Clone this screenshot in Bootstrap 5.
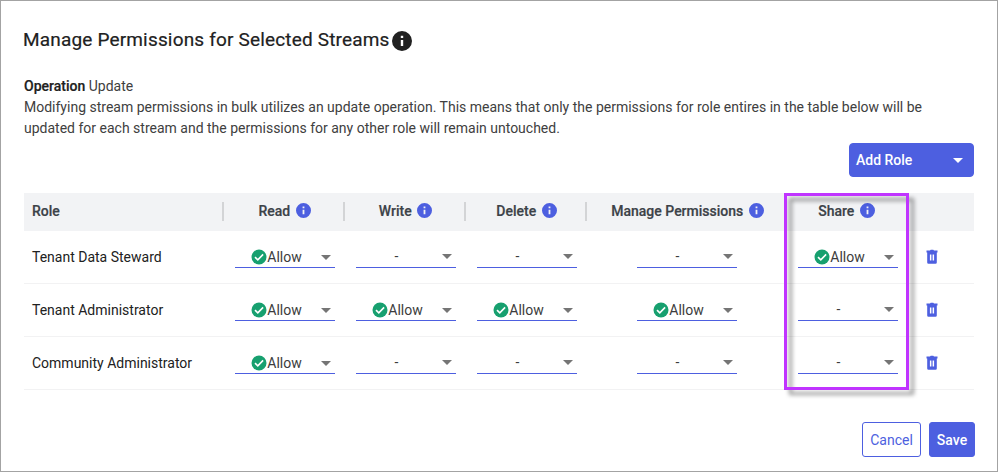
<!DOCTYPE html>
<html lang="en">
<head>
<meta charset="utf-8">
<meta name="viewport" content="width=device-width, initial-scale=1">
<title>Manage Permissions</title>
<link href="https://cdn.jsdelivr.net/npm/bootstrap@5.3.0/dist/css/bootstrap.min.css" rel="stylesheet">
<style>
:root{--brand:#4d5fe0}
body{font-family:Roboto,"Liberation Sans",sans-serif;font-size:14px;line-height:21px;color:#3a3a3a;background:#fff}
.dialog{width:998px;height:472px;border:1px solid #a3a3a3;padding:0 23px 0 22px}
.dialog-title{font-size:19px;line-height:28px;font-weight:400;letter-spacing:.17px;color:#212121;margin:25px 0 22px;-webkit-text-stroke:.2px #212121}
.title-info{margin:2px 0 0 2px}
.intro{margin:0 0 4px 1px;color:#404040}
.intro b{font-weight:500;color:#212121;-webkit-text-stroke:.2px}
.btn{--bs-btn-font-size:14px;--bs-btn-border-radius:3px;padding:0;line-height:20px}
.btn-brand{background:var(--brand);border-color:var(--brand);color:#fff;font-weight:500}
.add-role{width:125px;height:34px;padding:0 10px 0 6px;border-radius:4px}
.perm-table{table-layout:fixed;border-collapse:separate;border-spacing:0;width:950px;margin:16px 0 0 1px;color:#212121}
.perm-table>thead th{height:38px;padding:0 0 2px;background:#f2f3f5;color:#3c4248;font-weight:500;-webkit-text-stroke:.2px;border:0;position:relative;text-align:center;white-space:nowrap}
.perm-table>tbody td{height:53px;padding:0;border-bottom:1px solid #f2f2f3;vertical-align:top;background:#fff}
.perm-table>thead th:first-child{text-align:left;padding-left:8px}
.perm-table>tbody td:first-child{padding:16px 0 0 8px}
.sep::after{content:"";position:absolute;right:0;top:9px;width:2px;height:19px;background:#d3d4d6}
.info{width:15px;height:15px;margin:-3px 0 0 2px;fill:var(--brand)}
.perm{width:100px;height:27px;margin:10px 0 0 11px;padding-top:7px;border-bottom:1px solid var(--brand);color:#3c3c3c}
.share{margin-left:10px}
.manage{margin-left:50px}
.perm-val{width:83px}
.perm svg{display:block}
.check{width:16px;height:16px;margin-top:-2px}
.none .perm-val,.none .caret{position:relative;top:-1px}
.none .perm-val{padding-right:2px}
.caret{width:10px;height:5px;fill:#757575;margin-left:3px}
.trash{display:block;width:18px;height:18px;margin:17px 0 0 14px;fill:var(--brand)}
.highlight{position:absolute;left:784px;top:193px;width:125px;height:197px;border:3px solid #c034ff;filter:drop-shadow(5px 5px 2px rgba(0,0,0,.4));pointer-events:none}
.actions{margin:32px -1px 0 0}
.cancel{width:59px;height:35px;border-color:var(--brand);color:var(--brand)}
.save{width:46px;height:35px}
</style>
<script src="https://cdn.jsdelivr.net/npm/bootstrap@5.3.0/dist/js/bootstrap.bundle.min.js"></script>
</head>
<body class="overflow-hidden">
<svg class="d-none">
  <symbol id="i-info" viewBox="2 2 20 20"><path d="M12 2a10 10 0 1 0 0 20 10 10 0 0 0 0-20zm1.200 15h-2.400v-6h2.400v6zm0-8h-2.400V6.800h2.400V9z"/></symbol>
  <symbol id="i-check" viewBox="0 0 16 16"><circle cx="8" cy="8" r="7.500" fill="#17a06f"/><path d="M4 8.200l2.800 2.700 5.300-5.500" fill="none" stroke="#fff" stroke-width="1.600"/></symbol>
  <symbol id="i-caret" viewBox="0 0 10 5"><path d="M0 0h10L5 5z"/></symbol>
  <symbol id="i-trash" viewBox="0 0 18 18"><path fill-rule="evenodd" d="M3.500 2.600H7l.7-.8h2.600l.7.800h3.500v2h-11zM4.200 4.600h9.600v9.900a1.300 1.300 0 0 1-1.300 1.300H5.500a1.300 1.300 0 0 1-1.300-1.300zM6.900 6.500v6h1.500v-6zM9.600 6.500v6h1.500v-6z"/></symbol>
</svg>
<main class="dialog position-relative d-flex flex-column">
  <h1 class="dialog-title d-flex align-items-center">Manage Permissions for Selected Streams<svg class="title-info" width="20" height="20" fill="#212121"><use href="#i-info"/></svg></h1>
  <p class="intro"><b>Operation</b> Update<br>Modifying stream permissions in bulk utilizes an update operation. This means that only the permissions for role entires in the table below will be<br>updated for each stream and the permissions for any other role will remain untouched.</p>
  <div class="d-flex justify-content-end">
    <button class="btn btn-brand add-role d-flex align-items-center justify-content-between">Add Role<svg width="10" height="5" fill="#fff"><use href="#i-caret"/></svg></button>
  </div>
  <table class="table perm-table mb-0">
    <colgroup><col style="width:200px"><col style="width:121px"><col style="width:121px"><col style="width:121px"><col style="width:201px"><col style="width:121px"><col style="width:65px"></colgroup>
    <thead class="align-middle"><tr>
      <th class="sep">Role</th>
      <th class="sep">Read <svg class="info"><use href="#i-info"/></svg></th>
      <th class="sep">Write <svg class="info"><use href="#i-info"/></svg></th>
      <th class="sep">Delete <svg class="info"><use href="#i-info"/></svg></th>
      <th>Manage Permissions <svg class="info"><use href="#i-info"/></svg></th>
      <th class="pe-1">Share <svg class="info"><use href="#i-info"/></svg></th>
      <th></th>
    </tr></thead>
    <tbody id="rows"></tbody>
  </table>
  <div class="actions d-flex justify-content-end gap-2">
    <button class="btn cancel">Cancel</button>
    <button class="btn btn-brand save">Save</button>
  </div>
</main>
<div class="highlight"></div>
<script>
const roles = [
  ["Tenant Data Steward", [1,0,0,0,1]],
  ["Tenant Administrator", [1,1,1,1,0]],
  ["Community Administrator", [1,0,0,0,0]]
];
const columns = ["read", "write", "delete", "manage", "share"];
const caret = '<svg class="caret"><use href="#i-caret"/></svg>';
const cell = (allow, i) => `<td><div class="perm ${columns[i]} d-flex align-items-center ${allow ? "" : "none"}">
  <div class="perm-val d-flex justify-content-center align-items-center">${allow ? '<svg class="check"><use href="#i-check"/></svg>Allow' : "-"}</div>${caret}</div></td>`;
document.getElementById("rows").innerHTML = roles.map(([name, p]) =>
  `<tr><td>${name}</td>${p.map(cell).join("")}<td><svg class="trash"><use href="#i-trash"/></svg></td></tr>`).join("");
</script>
</body>
</html>
